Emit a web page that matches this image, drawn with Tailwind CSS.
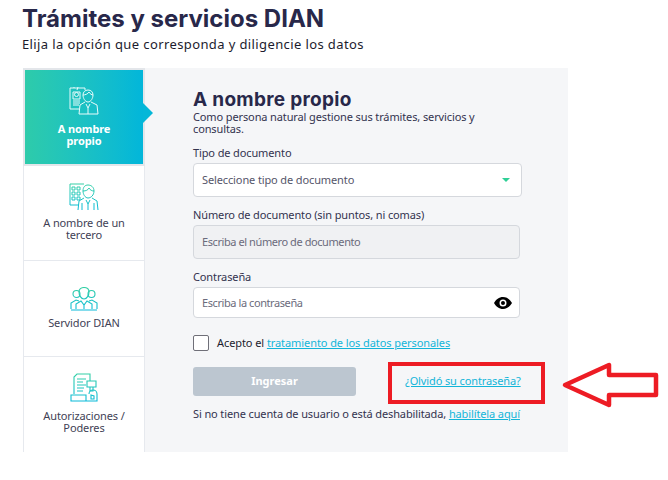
<!DOCTYPE html>
<html lang="es">
<head>
    <meta charset="UTF-8" />
    <title>Trámites y servicios DIAN</title>
    <script src="https://cdn.jsdelivr.net/npm/@tailwindcss/browser@4"></script>
</head>
<body class="bg-white relative h-[480px] w-[668px] overflow-hidden font-['Noto_Sans',sans-serif] text-[#33334f]">
<div class="pl-[22px] pt-[4px]">
    <h1 class="font-['Inter',sans-serif] font-bold text-[24px] leading-[30px] text-[#28284a]">Trámites y servicios DIAN</h1>
    <p class="text-[13px] leading-[18px] mt-[1px] tracking-[0.39px] text-[#1c1c2e]">Elija la opción que corresponda y diligencie los datos</p>
</div>

<div class="ml-[22px] mt-[15px] w-[546px] h-[384px] bg-[#f5f6f8] flex">
    <!-- menu -->
    <div class="w-[123px] pl-[1px] bg-white flex flex-col shrink-0">
        <div class="relative h-[98px] border-2 border-[#e3e6ea] bg-gradient-to-r from-[#2ecbaa] to-[#02b6da] flex flex-col items-center pt-[17px] text-white">
            <svg class="w-[30px] h-[28px]" viewBox="0 0 30 28" fill="none" stroke="#e9fbfb" stroke-width="1">
                <path d="M16 3V1H1v21h9M5 1V0M8 3l1-3M4 5h7v7H4zM4 14h7M4 16h7M4 18h6"/>
                <circle cx="7.500" cy="7.500" r="2"/>
                <path d="M14 8c0-3 2-5 5-5s5 2 5 5-2 7-5 7-5-4-5-7zM14 8c2 0 5-1 6-3 1 2 3 3 4 3M16 15l-5 3-1 9M22 15l6 3 1 9M10 27h19M17 17l2 4 2-4M19 21v6"/>
            </svg>
            <p class="mt-[8px] text-[11px] leading-[12px] font-bold text-center tracking-[-0.1px]">A nombre<br>propio</p>
            <div class="absolute left-full top-[33px] w-0 h-0 border-y-[10px] border-y-transparent border-l-[10px] border-l-[#04b7d8]"></div>
        </div>
        <div class="h-[95px] border-x border-b border-[#e6e9ee] flex flex-col items-center pt-[17px]">
            <svg class="w-[30px] h-[28px]" viewBox="0 0 30 28" fill="none" stroke="url(#grad-tercero)" stroke-width="1">
                <defs>
                    <linearGradient id="grad-tercero" gradientUnits="userSpaceOnUse" x1="0" y1="0" x2="0" y2="28">
                        <stop offset="0" stop-color="#35d0a4"/>
                        <stop offset="1" stop-color="#08b9da"/>
                    </linearGradient>
                </defs>
                <path d="M15 1H1v21h9M3 4h3v3H3zM8 4h3v3H8zM3 9h3v3H3zM8 9h3v3H8zM3 14h3v3H3zM8 14h3v3H8z"/>
                <path d="M14 8c0-4 2-6 5-6s6 2 6 6-3 7-6 7-5-4-5-7zM14 8c3 0 5-1 6-3 1 2 3 3 5 3"/>
                <path d="M15 15l-5 3-1 9M23 15l5 3 1 9M17 17l2 4 2-4M19 21v6M13 20v7M25 20v7"/>
            </svg>
            <p class="mt-[6px] text-[11px] leading-[12px] text-center tracking-[-0.12px] text-[#3f3f55]">A nombre de un<br>tercero</p>
        </div>
        <div class="h-[96px] border-x border-b border-[#e6e9ee] flex flex-col items-center pt-[26px]">
            <svg class="w-[28px] h-[24px]" viewBox="0 0 28 24" fill="none" stroke="url(#grad-servidor)" stroke-width="1.100">
                <defs>
                    <linearGradient id="grad-servidor" gradientUnits="userSpaceOnUse" x1="0" y1="0" x2="0" y2="24">
                        <stop offset="0" stop-color="#35d0a4"/>
                        <stop offset="1" stop-color="#08b9da"/>
                    </linearGradient>
                </defs>
                <circle cx="6.500" cy="7" r="3.500"/>
                <circle cx="21.500" cy="7" r="3.500"/>
                <path d="M9 5c0-3 2-4.500 5-4.500s5 1.500 5 4.500-2 7-5 7-5-4-5-7z"/>
                <path d="M1 22v-6l5-3 3 1M27 22v-6l-5-3-3 1M6 22v-5l5-3 3 4 3-4 5 3v5M1 23h26M14 18v4"/>
            </svg>
            <p class="mt-[6px] text-[11px] leading-[12px] text-center tracking-[-0.12px] text-[#3f3f55]">Servidor DIAN</p>
        </div>
        <div class="flex-1 border-x border-[#e6e9ee] flex flex-col items-center pt-[16px]">
            <svg class="w-[28px] h-[29px]" viewBox="0 0 28 29" fill="none" stroke="url(#grad-autorizaciones)" stroke-width="1.100">
                <defs>
                    <linearGradient id="grad-autorizaciones" gradientUnits="userSpaceOnUse" x1="0" y1="0" x2="0" y2="29">
                        <stop offset="0" stop-color="#35d0a4"/>
                        <stop offset="1" stop-color="#08b9da"/>
                    </linearGradient>
                </defs>
                <path d="M4 21V4l3-3h13v7M7 6h9M7 9h6M7 12h9M7 15h7M7 18h6"/>
                <path d="M17 8h9v6h-9zM20 14h3v4h-3z"/>
                <path d="M1 22h15v6H1zM16 28h11v-7a4 4 0 0 0-8 0"/>
                <path d="M21 22l3 1v3h-3z"/>
            </svg>
            <p class="mt-[8px] text-[11px] leading-[12px] text-center tracking-[-0.12px] text-[#3f3f55]">Autorizaciones /<br>Poderes</p>
        </div>
    </div>

    <!-- form -->
    <div class="pl-[48px] pt-[21px] w-[377px]">
        <h2 class="font-['Inter',sans-serif] font-bold text-[19px] leading-[22px] tracking-[0.3px] text-[#28284a]">A nombre propio</h2>
        <p class="text-[11px] leading-[12px] w-[295px] tracking-[-0.12px]">Como persona natural gestione sus trámites, servicios y consultas.</p>

        <label class="block mt-[11px] text-[11px] leading-[14px] tracking-[-0.12px]">Tipo de documento</label>
        <div class="mt-[3px] w-[329px] h-[34px] bg-white border border-[#d5d8dd] rounded-[4px] flex items-center justify-between pl-[8px] pr-[11px]">
            <span class="text-[11px] tracking-[-0.12px] text-[#55556a]">Seleccione tipo de documento</span>
            <span class="w-0 h-0 border-x-[4px] border-x-transparent border-t-[4px] border-t-[#2ecf96]"></span>
        </div>

        <label class="block mt-[11px] text-[11px] leading-[14px] tracking-[-0.12px]">Número de documento (sin puntos, ni comas)</label>
        <div class="mt-[3px] w-[327px] h-[34px] bg-[#f0f1f3] border border-[#d5d8dd] rounded-[4px] flex items-center pl-[8px]">
            <span class="text-[11px] tracking-[-0.42px] text-[#6b6b7c]">Escriba el número de documento</span>
        </div>

        <label class="block mt-[11px] text-[11px] leading-[14px] tracking-[-0.12px]">Contraseña</label>
        <div class="mt-[3px] w-[327px] h-[31px] bg-white border border-[#d5d8dd] rounded-[4px] flex items-center justify-between pl-[8px] pr-[7px]">
            <span class="text-[11px] tracking-[-0.42px] pt-[1px] text-[#6b6b7c]">Escriba la contraseña</span>
            <svg class="w-[18px] h-[12px]" viewBox="0 0 18 12" fill="#000">
                <path fill-rule="evenodd" d="M9 0c4 0 7 2.500 9 6-2 3.500-5 6-9 6s-7-2.500-9-6c2-3.500 5-6 9-6zm0 2.500a3.500 3.500 0 1 0 0 7 3.500 3.500 0 0 0 0-7zm0 1.500a2 2 0 1 1 0 4 2 2 0 0 1 0-4z"/>
            </svg>
        </div>

        <div class="mt-[17px] flex items-center">
            <span class="w-[16px] h-[16px] bg-white border border-[#6f6f78] rounded-[2px]"></span>
            <span class="ml-[8px] text-[11px] text-[#1c1c2e] tracking-[-0.08px]">Acepto el <a class="text-[#12b5d8] underline">tratamiento de los datos personales</a></span>
        </div>

        <div class="mt-[15px] flex items-center">
            <button class="w-[163px] h-[29px] shrink-0 bg-[#bcc6d0] rounded-[3px] text-white text-[11px] font-bold">Ingresar</button>
            <a class="ml-[49px] whitespace-nowrap text-[11px] text-[#12b5d8] underline tracking-[-0.12px]">¿Olvidó su contraseña?</a>
        </div>

        <p class="mt-[11px] text-[11px] leading-[14px] tracking-[-0.12px] whitespace-nowrap">Si no tiene cuenta de usuario o está deshabilitada, <a class="text-[#12b5d8] underline">habilítela aquí</a></p>
    </div>
</div>

<!-- red annotation -->
<div class="absolute left-[388px] top-[362px] w-[157px] h-[42px] border-[4px] border-[#ed1c24]"></div>
<svg class="absolute left-[560px] top-[360px] w-[100px] h-[50px]" viewBox="0 0 100 50" fill="none" stroke="#ed1c24" stroke-width="4.500" stroke-linejoin="round">
    <path d="M5 25L49 5v10h47v20H49v10z"/>
</svg>
</body>
</html>
